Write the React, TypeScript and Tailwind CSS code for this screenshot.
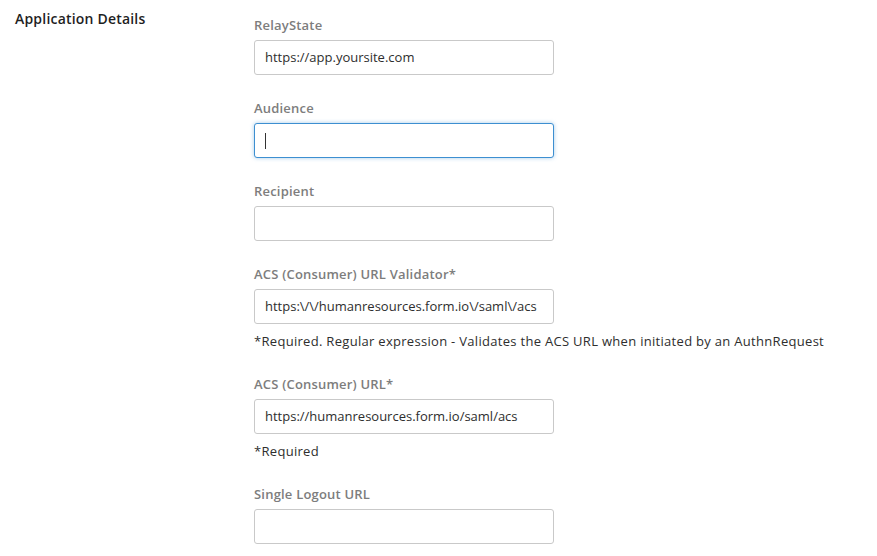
type Field = {
  label: string;
  value?: string;
  focused?: boolean;
  help?: string;
};

const fields: Field[] = [
  { label: "RelayState", value: "https://app.yoursite.com" },
  { label: "Audience", focused: true },
  { label: "Recipient" },
  {
    label: "ACS (Consumer) URL Validator*",
    value: "https:\\/\\/humanresources.form.io\\/saml\\/acs",
    help: "*Required. Regular expression - Validates the ACS URL when initiated by an AuthnRequest",
  },
  {
    label: "ACS (Consumer) URL*",
    value: "https://humanresources.form.io/saml/acs",
    help: "*Required",
  },
  { label: "Single Logout URL" },
];

function FormField({ field }: { field: Field }) {
  return (
    <div className={field.help ? "mb-[25px]" : "mb-[24px]"}>
      <div className="text-[13px] leading-[18px] font-semibold tracking-[0.2px] text-[#7d7d7d] mb-[6px]">{field.label}</div>
      <div
        className={
          "w-[300px] h-[35px] rounded-[3px] bg-white flex items-center pl-[10px] pr-[8px] overflow-hidden border " +
          (field.focused
            ? "border-[#3d8fd1] shadow-[0_0_4px_rgba(61,143,209,0.45)]"
            : "border-[#c9c9c9]")
        }
      >
        {field.focused ? (
          <span className="w-px h-[16px] bg-[#333]" />
        ) : (
          <span className="whitespace-nowrap text-[13px] text-[#2e2e2e]">{field.value}</span>
        )}
      </div>
      {field.help && (
        <div className="mt-[8px] text-[13px] leading-[18px] tracking-[0.3px] text-[#2e2e2e] whitespace-nowrap">{field.help}</div>
      )}
    </div>
  );
}

export default function App() {
  return (
    <div className="w-[877px] h-[556px] bg-white overflow-hidden flex font-['Open_Sans',sans-serif]">
      <div className="w-[254px] shrink-0 pl-[15px] pt-[10px]">
        <h2 className="text-[14px] leading-[18px] font-semibold tracking-[0.2px] text-[#1f1f1f]">Application Details</h2>
      </div>
      <div className="pt-[16px]">
        {fields.map((f) => (
          <FormField key={f.label} field={f} />
        ))}
      </div>
    </div>
  );
}
